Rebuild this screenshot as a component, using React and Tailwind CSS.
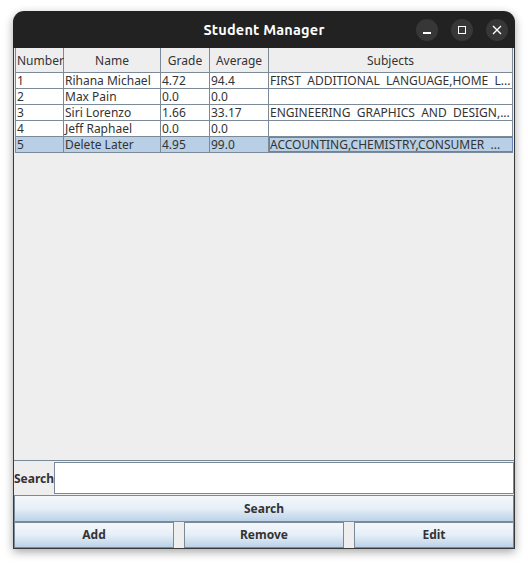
import React from "react";

const rows = [
  ["1", "Rihana Michael", "4.72", "94.4", "FIRST  ADDITIONAL  LANGUAGE,HOME  L..."],
  ["2", "Max Pain", "0.0", "0.0", ""],
  ["3", "Siri Lorenzo", "1.66", "33.17", "ENGINEERING  GRAPHICS  AND  DESIGN,..."],
  ["4", "Jeff Raphael", "0.0", "0.0", ""],
  ["5", "Delete Later", "4.95", "99.0", "ACCOUNTING,CHEMISTRY,CONSUMER  ..."],
];

const widths = ["w-[48px]", "w-[97px]", "w-[49px]", "w-[59px]", "flex-1"];

function Btn({ children, className = "" }) {
  return (
    <div
      className={
        "flex items-center justify-center border border-[#7a8a99] bg-gradient-to-b from-[#f4f8fc] via-[#e6eef7] to-[#bcd2e8] text-[12px] font-bold text-[#333] " +
        className
      }
    >
      {children}
    </div>
  );
}

export default function App() {
  return (
    <div className="w-[528px] h-[566px] bg-white pt-[11px] pl-[13px] font-['Noto_Sans',sans-serif]">
      <div className="w-[502px] rounded-t-[11px] shadow-[0_3px_10px_rgba(0,0,0,0.35)] overflow-hidden">
        <div className="relative h-[37px] bg-[#222222] flex items-center justify-center">
          <span className="text-white text-[14.5px] font-bold font-['Ubuntu','Noto_Sans',sans-serif] tracking-[0.2px]">
            Student Manager
          </span>
          <div className="absolute right-[7px] top-[8px] flex gap-[13px]">
            <div className="w-[22px] h-[22px] rounded-full bg-[#373737] flex items-center justify-center">
              <div className="w-[8px] h-[1.5px] bg-white mt-[6px]" />
            </div>
            <div className="w-[22px] h-[22px] rounded-full bg-[#373737] flex items-center justify-center">
              <div className="w-[8px] h-[8px] border-[1.5px] border-white" />
            </div>
            <div className="w-[22px] h-[22px] rounded-full bg-[#373737] flex items-center justify-center">
              <svg width="10" height="10" viewBox="0 0 10 10">
                <path d="M1 1L9 9M9 1L1 9" stroke="white" strokeWidth="1.4" />
              </svg>
            </div>
          </div>
        </div>
        <div className="bg-[#eeeeee] border-x border-b border-[#3a3a3a] flex flex-col">
          <div className="h-[413px] border-b border-[#7a8a99] flex flex-col pl-[1px] pr-[1px]">
            <div className="flex h-[25px] border-b border-[#7a8a99] border-l border-[#7a8a99] bg-[#eeeeee]">
              {["Number", "Name", "Grade", "Average", "Subjects"].map((h, i) => (
                <div
                  key={h}
                  className={
                    widths[i] +
                    " border-r border-[#7a8a99] flex items-center pt-[2px] text-[12px] text-[#333] " +
                    (i === 0 ? "justify-start pl-[1px]" : "justify-center")
                  }
                >
                  {h}
                </div>
              ))}
            </div>
            {rows.map((r, ri) => {
              const sel = ri === 4;
              return (
                <div
                  key={ri}
                  className={
                    "flex h-[16px] border-b border-[#7a8a99] border-l " +
                    (sel ? "bg-[#b8cfe5]" : "bg-white")
                  }
                >
                  {r.map((c, ci) => (
                    <div
                      key={ci}
                      className={
                        widths[ci] +
                        " border-r border-[#7a8a99] text-[12px] leading-[15px] text-[#333] pl-[1px] whitespace-pre overflow-hidden " +
                        (sel && ci === 4 ? "outline outline-1 -outline-offset-1 outline-[#6382bf]" : "")
                      }
                    >
                      {c}
                    </div>
                  ))}
                </div>
              );
            })}
          </div>
          <div className="flex h-[34px] items-stretch py-[1px]">
            <div className="w-[40px] flex items-center pt-[2px] text-[12px] font-bold text-[#333]">Search</div>
            <div className="flex-1 bg-white border border-[#7a8a99]" />
          </div>
          <Btn className="h-[27px]">Search</Btn>
          <div className="flex gap-[10px]">
            <Btn className="flex-1 h-[26px]">Add</Btn>
            <Btn className="flex-1 h-[26px]">Remove</Btn>
            <Btn className="flex-1 h-[26px]">Edit</Btn>
          </div>
        </div>
      </div>
    </div>
  );
}
